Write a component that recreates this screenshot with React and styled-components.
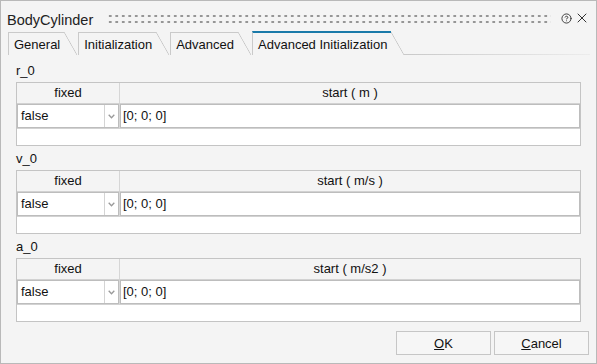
import React from 'react';
import styled, { createGlobalStyle } from 'styled-components';
import { CircleHelp, X } from 'lucide-react';

const GlobalStyle = createGlobalStyle`
  html, body { margin: 0; padding: 0; background: #f4f4f4; }
  body { font-family: "Liberation Sans", Arial, sans-serif; color: #1b1b1b; }
  * { box-sizing: border-box; }
`;

const Window = styled.div`
  width: 597px;
  height: 364px;
  border: 1px solid #b9b9b9;
  background: #f4f4f4;
  display: flex;
  flex-direction: column;
  overflow: hidden;
`;

const TitleBar = styled.div`
  height: 31px;
  display: flex;
  align-items: flex-start;
  padding: 11px 6px 0 6px;
`;

const Title = styled.div`
  font-size: 14.5px;
  line-height: 17px;
  color: #222;
`;

// dotted drag grip between title and icons
const Grip = styled.div`
  flex: 1;
  height: 12px;
  margin: 1px 10px 0 14px;
  background-image: radial-gradient(circle, #969696 1.1px, transparent 1.4px);
  background-size: 6.5px 6px;
`;

const TitleIcons = styled.div`
  display: flex;
  align-items: center;
  gap: 2px;
  height: 16px;
  margin-top: -2px;
  color: #333;
`;

const TabBar = styled.div`
  display: flex;
  align-items: flex-end;
  height: 23px;
  padding-left: 7px;
`;

const Tab = styled.div`
  position: relative;
  height: ${(p) => (p.$active ? 24 : 23)}px;
  margin-right: ${(p) => (p.$active ? 13 : 14)}px;
  padding: 3px 4px 0 5px;
  border-left: 1px solid #cacaca;
  border-top: ${(p) => (p.$active ? '2px solid #1a7aa9' : '1px solid #cacaca')};
  font-size: 13px;
  line-height: 18px;
  color: #111;
  white-space: nowrap;

  &::after {
    content: '';
    position: absolute;
    left: 100%;
    top: -1px;
    width: 13px;
    height: 23px;
    background: linear-gradient(
      to top right,
      transparent calc(50% - 0.7px),
      #c6c6c6 50%,
      transparent calc(50% + 0.7px)
    );
  }
`;

const TabLine = styled.div`
  flex: 1;
  height: 1px;
  margin-right: 6px;
  background: linear-gradient(to right, #c9c9c9, #ececec);
`;

const Content = styled.div`
  display: flex;
  flex-direction: column;
  gap: 5px;
  padding: 8px 15px 0;
`;

const Section = styled.div`
  display: flex;
  flex-direction: column;
`;

const Label = styled.div`
  font-size: 13px;
  line-height: 16px;
  margin-bottom: 3px;
  color: #111;
`;

const Table = styled.div`
  border: 1px solid #c4c4c4;
  background: #fff;
`;

const Row = styled.div`
  display: grid;
  grid-template-columns: 103px 1fr;
  height: ${(p) => p.$h}px;
  border-bottom: 1px solid #d2d2d2;
  background: ${(p) => (p.$header ? '#f4f4f4' : '#fff')};
`;

const EmptyRow = styled.div`
  height: 16px;
  background: #fff;
`;

const HeaderCell = styled.div`
  text-align: center;
  font-size: 13px;
  line-height: 20px;
  color: #111;
  border-right: ${(p) => (p.$first ? '1px solid #d6d6d6' : 'none')};
`;

const Cell = styled.div`
  display: flex;
  border-right: ${(p) => (p.$first ? '1px solid #d6d6d6' : 'none')};
`;

const Combo = styled.div`
  flex: 1;
  display: flex;
  height: 24px;
  border: 1px solid #bdbdbd;
  background: #fff;
`;

const ComboText = styled.div`
  flex: 1;
  padding-left: 3px;
  font-size: 13px;
  line-height: 22px;
  color: #111;
`;

const ComboArrow = styled.div`
  width: 14px;
  border-left: 1px solid #d4d4d4;
  display: flex;
  align-items: center;
  justify-content: center;
`;

const Input = styled.div`
  flex: 1;
  height: 24px;
  border: 1px solid #bdbdbd;
  padding-left: 2px;
  font-size: 13px;
  line-height: 22px;
  color: #111;
`;

const Footer = styled.div`
  margin-top: auto;
  display: flex;
  justify-content: flex-end;
  gap: 3px;
  padding: 0 7px 8px 0;
`;

const Button = styled.button`
  width: 95px;
  height: 24px;
  border: 1px solid #c6c6c6;
  background: #f6f6f6;
  font-family: "Liberation Sans", Arial, sans-serif;
  font-size: 13px;
  color: #111;
  padding: 0;
`;

const Chevron = () => (
  <svg width="7" height="5" viewBox="0 0 7 5">
    <polyline points="0.7,0.8 3.5,3.8 6.3,0.8" fill="none" stroke="#9a9a9a" strokeWidth="1.3" />
  </svg>
);

const params = [
  { name: 'r_0', unit: 'm' },
  { name: 'v_0', unit: 'm/s' },
  { name: 'a_0', unit: 'm/s2' },
];

const tabs = ['General', 'Initialization', 'Advanced', 'Advanced Initialization'];

const ParamTable = ({ name, unit }) => (
  <Section>
    <Label>{name}</Label>
    <Table>
      <Row $header $h={21}>
        <HeaderCell $first>fixed</HeaderCell>
        <HeaderCell>start ( {unit} )</HeaderCell>
      </Row>
      <Row $h={25}>
        <Cell $first>
          <Combo>
            <ComboText>false</ComboText>
            <ComboArrow>
              <Chevron />
            </ComboArrow>
          </Combo>
        </Cell>
        <Cell>
          <Input>[0; 0; 0]</Input>
        </Cell>
      </Row>
      <EmptyRow />
    </Table>
  </Section>
);

export default function App() {
  return (
    <>
      <GlobalStyle />
      <Window>
        <TitleBar>
          <Title>BodyCylinder</Title>
          <Grip />
          <TitleIcons>
            <CircleHelp size={11} strokeWidth={2} />
            <X size={16} strokeWidth={1.5} />
          </TitleIcons>
        </TitleBar>
        <TabBar>
          {tabs.map((t, i) => (
            <Tab key={t} $active={i === tabs.length - 1}>
              {t}
            </Tab>
          ))}
          <TabLine />
        </TabBar>
        <Content>
          {params.map((p) => (
            <ParamTable key={p.name} {...p} />
          ))}
        </Content>
        <Footer>
          <Button>
            <u>O</u>K
          </Button>
          <Button>
            <u>C</u>ancel
          </Button>
        </Footer>
      </Window>
    </>
  );
}
